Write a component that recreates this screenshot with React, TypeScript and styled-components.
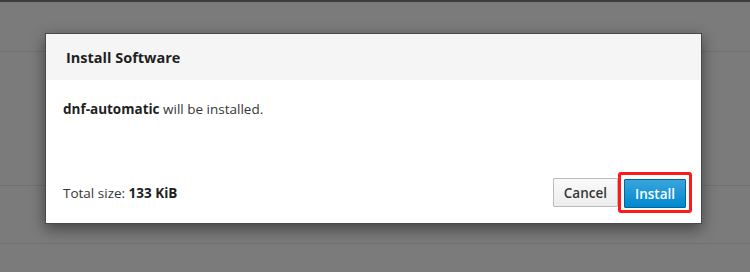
import styled, { createGlobalStyle } from "styled-components";

const GlobalStyle = createGlobalStyle`
	html, body {
		margin: 0;
		padding: 0;
		background: #7b7b7b;
		font-family: "Open Sans", "Liberation Sans", sans-serif;
	}
`

const Page = styled.div`
	position: relative;
	width: 750px;
	height: 272px;
	overflow: hidden;
	background: #7b7b7b;
	border-top: 2px solid #3c3c3c;
	box-sizing: border-box;
`

const BackgroundRow = styled.div<{ $height: number }>`
	height: ${(props) => props.$height}px;
	border-bottom: 1px solid #707070;
`

const Overlay = styled.div`
	position: absolute;
	inset: 0;
	display: flex;
	justify-content: flex-start;
	align-items: flex-start;
	padding: 31px 0 0 45px;
`

const Dialog = styled.div`
	width: 657px;
	background: #ffffff;
	border: 1px solid #4a4a4a;
	box-sizing: border-box;
	box-shadow: 0 5px 14px rgba(0, 0, 0, 0.45);
	display: flex;
	flex-direction: column;
`

const Header = styled.div`
	height: 46px;
	background: #f5f5f5;
	display: flex;
	align-items: center;
	padding: 0 20px;
`

const Title = styled.h1`
	margin: 0;
	font-size: 14.5px;
	font-weight: 700;
	color: #1f1f1f;
`

const Body = styled.div`
	padding: 20px 17px 0;
	height: 92px;
	box-sizing: border-box;
	font-size: 13.5px;
	line-height: 18px;
	color: #363636;
`

const Footer = styled.div`
	display: flex;
	align-items: center;
	justify-content: space-between;
	padding: 0 9px 10px 17px;
	font-size: 13.5px;
	color: #363636;
`

const Strong = styled.strong`
	font-weight: 700;
	color: #1f1f1f;
`

const Buttons = styled.div`
	display: flex;
	align-items: center;
`

const Button = styled.button<{ $primary?: boolean }>`
	height: 29px;
	padding: 0 10px;
	font-family: "Open Sans", "Liberation Sans", sans-serif;
	font-size: 13.5px;
	font-weight: 600;
	border-radius: 1px;
	border: 1px solid ${(props) => (props.$primary ? "#00659c" : "#bbbbbb")};
	color: ${(props) => (props.$primary ? "#ffffff" : "#363636")};
	background: ${(props) =>
		props.$primary
			? "linear-gradient(to bottom, #39a5dc, #0088ce)"
			: "linear-gradient(to bottom, #fafafa, #ededed)"};
`

const Highlight = styled.span`
	display: inline-flex;
	padding: 4px 3px 2px;
	border: 3px solid #ff1a1a;
	border-radius: 3px;
`

export default function App() {
	return (
		<Page>
			<GlobalStyle />
			<BackgroundRow $height={49} />
			<BackgroundRow $height={133} />
			<BackgroundRow $height={57} />
			<Overlay>
				<Dialog>
					<Header>
						<Title>Install Software</Title>
					</Header>
					<Body>
						<Strong>dnf-automatic</Strong> will be installed.
					</Body>
					<Footer>
						<span>
							Total size: <Strong>133 KiB</Strong>
						</span>
						<Buttons>
							<Button>Cancel</Button>
							<Highlight>
								<Button $primary>Install</Button>
							</Highlight>
						</Buttons>
					</Footer>
				</Dialog>
			</Overlay>
		</Page>
	);
}
